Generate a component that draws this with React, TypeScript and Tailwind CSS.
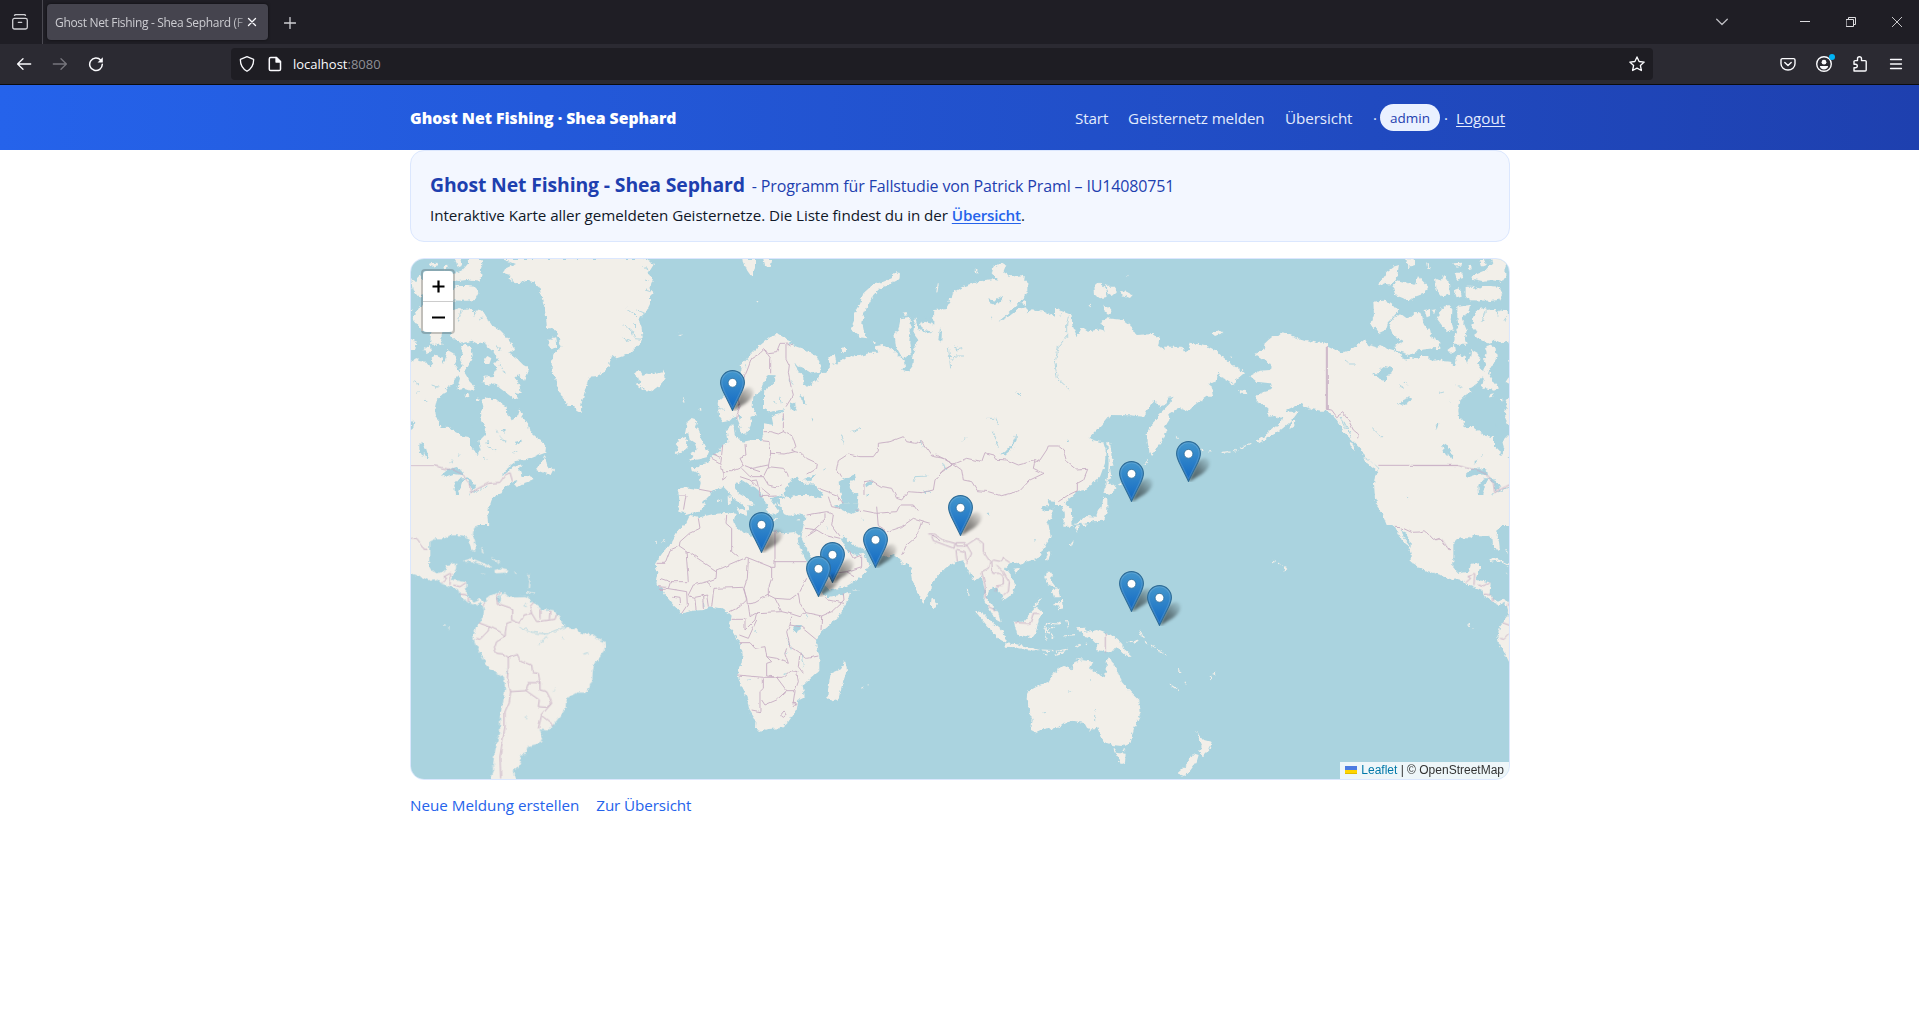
import type { ReactNode } from "react";

const WATER = "#aad3df";
const LAND = "#f2efe9";
const BORDER = "#c6adc3";

/* Map sheets: three units per pixel, placed at (x, y) of the map canvas. */
type Sheet = { x: number; y: number; land: string; water?: string; rivers?: string; islands?: string; borders?: string };

const americas: Sheet[] = [
  {
    x: 400,
    y: 250,
    land:
      "M-40 322L5 330 40 332 80 335 92 350 98 335 95 320 110 315 125 322 130 345 138 320 142 300 160 310 168 320 162 342 178 365 188 345 180 330 188 310 182 290 200 284 215 295 218 320 205 345 192 365 198 375 210 395 225 415 210 422 187 415 172 418 180 385 175 376 160 400 138 415 142 425 125 435 110 450 103 480 105 500 118 515 122 532 145 530 165 545 185 557 210 562 210 590 222 600 232 615 242 600 235 575 255 555 258 535 245 510 243 485 250 470 245 450 258 441 275 450 285 445 305 462 320 470 322 495 338 510 350 500 358 475 368 500 385 525 388 545 410 565 425 572 438 590 436 608 410 618 380 630 350 632 320 655 305 680 340 652 365 643 358 660 365 678 385 678 400 685 395 692 370 700 350 712 345 705 352 690 335 695 325 705 310 715 305 730 290 735 275 750 265 780 262 800 265 825 -40 825Z" +
      "M435 612L425 640 408 660 430 668 455 675 462 660 445 655 440 640Z" +
      "M178 200L190 180 215 177 222 190 230 178 248 182 262 205 275 225 300 240 320 260 335 280 342 300 328 308 350 325 370 345 388 355 380 375 372 392 355 375 345 385 358 402 362 430 345 425 358 446 340 445 320 430 300 415 285 400 262 405 245 395 255 380 278 378 292 352 275 340 298 335 280 305 262 290 255 275 230 280 215 272 190 280 160 265 150 255 170 240Z" +
      "M145 230L148 200 160 180 180 174 188 180 178 200 175 225 185 250 165 255Z" +
      "M163 118L175 108 200 108 225 110 235 130 225 150 200 152 140 151 125 140 125 110 145 110Z" +
      "M140 80L165 70 188 60 205 40 200 27 245 27 247 45 240 62 248 75 235 95 200 90 175 93 150 88Z" +
      "M165 27L180 27 185 45 172 50Z M88 40L112 38 116 46 95 50Z M130 46L142 44 143 55 133 58Z M92 68L115 68 118 84 98 90Z" +
      "M100 170L138 165 133 190 113 205 128 240 123 270 128 284 90 284 93 250 103 230 100 200Z" +
      "M38 205L53 175 73 165 85 178 83 215 88 238 70 245 53 225Z" +
      "M33 85L48 95 58 75 75 100 78 133 55 140 38 120Z M93 120L108 115 113 140 98 145Z" +
      "M252 330L262 318 274 325 268 342 256 342Z M195 435L206 430 208 440 198 442Z M228 446L236 446 234 454 228 452Z M70 300L90 285 93 305 80 312Z" +
      "M30 265L50 275 45 300 33 300Z M24 180L35 178 30 190Z",
    water:
      "M125 675L145 657 165 652 190 665 192 676 160 672 135 680Z M165 735L163 705 180 685 202 684 185 700 175 735Z M195 680L215 690 228 712 217 722 210 705Z" +
      "M54 585L66 578 78 595 86 622 82 628 72 608 70 622 60 605Z M324 478L330 474 332 482 326 484Z M152 632L158 632 158 640 152 640Z M215 525L220 520 222 530Z" +
      "M305 540L318 538 314 548Z M330 500L338 498 336 512Z M345 575L366 572 360 582 348 584Z M310 570L320 572 314 582Z M255 575L268 574 262 582Z M35 525L44 518 38 540Z",
    rivers: "M205 735L217 727 235 722 262 708 M262 590L290 600 M300 560L315 575 M95 405L115 412 M45 430L60 426 M75 450L84 458 M250 620L262 628 M285 540L295 548 M340 610L352 604 M175 620L180 610 M220 185L222 200 M248 200L240 212 M300 300L290 285 M300 345L310 365 320 372 M183 180L175 215",
    borders: "M-30 646L102 646 130 655 160 660 185 672 208 700 212 728 235 715 265 700 300 697 315 675 330 668 338 695",
  },
  {
    x: 400,
    y: 510,
    land:
      "M-40 -20L265 -20 265 15 245 35 222 55 218 75 225 95 228 120 218 122 207 100 205 85 190 76 150 76 135 85 110 85 90 95 80 105 78 150 90 175 105 190 135 185 140 165 168 160 168 175 158 198 155 210 175 212 200 218 197 250 210 268 222 275 240 266 252 280 252 292 240 278 225 285 205 275 180 258 175 240 150 230 125 220 105 208 85 210 60 198 33 190 0 180 -40 155Z" +
      "M248 285L258 268 275 255 300 243 305 250 292 262 292 275 300 280 303 268 300 255 315 250 325 260 380 258 395 275 410 285 425 298 460 300 478 320 487 340 500 353 530 358 545 370 575 373 595 388 613 395 614 415 605 435 583 460 578 485 577 510 560 548 530 548 505 562 498 575 497 595 480 620 455 650 445 662 415 658 428 680 420 700 385 708 380 730 358 735 365 748 356 770 338 785 350 815 268 815 282 780 282 740 290 700 300 670 300 620 310 570 315 540 313 505 290 490 262 470 245 435 225 400 220 380 228 350 250 320 252 300Z" +
      "M192 152L215 145 240 155 278 172 260 172 238 160 215 153 198 156Z M283 180L300 176 325 182 322 188 285 190Z M245 188L258 190 250 193Z M340 188L351 188 351 191 340 191Z",
    rivers: "M358 350L400 368 440 372 470 360 500 350 M415 405L440 378 M320 480L322 490 M374 622L382 622 M376 282L376 290 M550 432L564 428 M460 545L468 536 M488 380L492 388",
    islands: "M385 195L390 215 388 235 M245 115L250 130 M275 145L300 158 M380 245L405 250 M278 770L285 740 M130 345L138 346 M145 354L149 354",
    borders:
      "M33 85L50 85 65 105 72 118 82 118 M125 218L140 205 132 200 150 190 M152 190L150 225 M160 225L180 230 198 218 M180 252L200 255 M205 262L205 275 M250 280L250 288 M302 248L290 258 292 280 335 295 335 330 360 340 372 315 395 310 390 290 400 278 M335 335L320 340 316 365 316 380 290 395 283 415 290 430 310 432 325 442 325 480 322 505 332 545 M235 338L268 350 265 362 240 388 228 385 M268 350L300 365 315 382 M325 442L352 433 360 450 395 465 398 488 415 490 420 518 385 518 378 542 332 545 M378 542L418 570 415 590 440 592 455 580 M420 518L420 540 440 545 450 565 455 580 425 615 415 655 M425 617L460 645 M332 545L328 575 315 605 315 650 308 690 300 740 302 805 M395 310L410 335 435 332 465 328 470 312 M420 298L420 325 M450 302L448 328",
  },
  {
    x: 1220,
    y: 250,
    land:
      "M670 325L640 335 620 318 600 318 590 325 565 330 545 325 540 310 520 300 500 295 480 285 470 292 445 285 435 268 420 280 405 290 390 300 365 308 350 300 325 288 310 278 290 278 260 270 245 268 225 262 210 255 188 247 175 258 160 258 145 270 135 280 130 300 106 312 125 325 145 335 155 350 150 360 120 362 90 378 110 395 150 400 155 420 125 428 110 437 110 455 130 465 145 475 145 500 165 498 175 505 190 500 200 480 220 470 245 462 260 472 275 478 300 482 318 482 335 492 350 510 365 530 375 550 395 570 410 585 425 600 435 625 460 640 475 655 465 680 462 700 465 745 480 775 500 825 670 825Z" +
      "M195 485L185 515 160 535 130 560 105 575 120 577 150 558 185 538 215 512 235 485Z M208 538L215 515 226 512 222 528Z" +
      "M388 575L398 580 405 603 395 595Z M430 622L448 630 478 655 470 662 435 635Z M57 420L80 424 82 430 62 428Z" +
      "M508 225L520 205 540 190 560 205 575 200 590 185 605 190 612 225 630 240 635 265 660 285 640 295 600 300 570 315 540 305 520 290 550 275 530 265 515 245Z M614 180L630 178 630 198 620 202Z" +
      "M460 155L490 152 515 160 535 182 520 200 505 215 497 240 475 250 465 235 452 225 462 195Z" +
      "M520 112L530 90 550 95 585 105 595 75 605 90 625 110 615 130 585 140 565 155 550 145 525 135Z" +
      "M476 100L500 65 520 50 537 45 532 80 510 110 498 98 480 106Z M558 28L585 28 585 45 565 52Z M618 35L632 58 622 56Z",
    water:
      "M456 370L475 370 480 360 495 348 520 355 515 370 500 378 498 392 478 385Z M528 460L545 460 550 450 575 440 590 432 594 440 570 455 545 468Z M570 505L600 492 630 496 592 500Z M645 515L655 510 652 535 645 540Z M625 400L640 402 630 408Z M560 738L568 744 566 748Z",
    rivers: "M375 330L390 342 408 342 M535 405L552 415 M600 385L608 392 M456 535L475 555 M550 395L565 405 M655 395L670 405 M660 430L670 425 M360 500L380 540 M372 515L395 560 M480 560L490 560",
    islands: "M98 578L60 595 M50 598L40 602 M32 606L25 607 M15 609L5 610 M355 500L372 545 M30 318L36 322",
    borders: "M322 288L322 478 M319 288L319 478 335 480 350 500 368 488 385 510 400 540 415 552 413 565 M475 646L714 646",
  },
  {
    x: 1220,
    y: 510,
    land: "M465 -20L480 0 500 35 525 50 540 80 550 95 562 105 572 128 588 146 588 138 575 120 565 100 552 85 545 62 556 68 575 100 595 120 610 135 627 160 627 175 665 195 700 210 700 -20Z",
    borders: "M525 52L545 53 575 67 600 66 612 62 628 75 640 88 658 82 672 100 682 115 694 118",
  },
];

const oldWorld: Sheet[] = [
  {
    x: 400,
    y: 250,
    land:
      "M305 27L320 32 345 42 318 55 308 68 330 75 325 85 345 100 365 98 380 90 400 97 418 113 424 140 432 165 438 200 441 235 458 235 472 250 478 270 484 290 462 310 455 335 455 365 466 385 470 405 480 430 495 455 505 468 520 468 530 480 542 486 545 460 550 440 558 410 567 380 590 378 610 368 625 350 637 315 650 325 670 318 690 310 722 278 728 262 725 235 718 215 722 200 740 185 750 165 750 140 764 130 748 115 758 90 745 70 762 42 750 35 730 27Z" +
      "M446 268L465 262 470 290 455 298 444 285Z" +
      "M705 365L720 363 728 378 735 370 750 372 768 368 790 362 797 385 780 405 755 424 735 420 720 410 706 402 727 394 708 380Z M834 255L845 250 842 258Z",
    rivers: "M728 268L705 266 695 240 670 225 M715 205L700 190 680 175 M700 220L720 240 M712 180L735 190 M730 50L745 60 M735 90L750 95 M735 120L752 125 M442 245L460 270 M340 95L335 85 M665 265L690 275",
    islands: "M851 442L855 458",
  },
  {
    x: 660,
    y: 250,
    land:
      "M173 455L195 435 220 400 245 360 242 345 270 315 295 290 330 262 355 252 375 265 395 272 385 280 410 290 440 300 470 320 484 345 480 365 455 370 430 355 405 345 420 368 430 375 430 400 440 410 455 405 460 390 472 395 480 370 495 365 510 355 505 320 525 316 528 330 518 345 540 335 560 320 600 318 630 308 655 308 648 288 670 285 700 300 720 320 735 335 738 350 722 358 745 365 760 345 762 325 775 305 795 305 795 325 780 338 770 325 755 330 762 300 775 270 760 250 765 200 775 235 800 250 820 245 790 240 780 222 795 215 825 225 845 250 835 270 845 290 850 260 840 210 820 205 820 182 875 178 865 150 880 135 910 120 910 830 430 830 437 797 410 792 390 797 370 788 365 765 356 745 375 742 365 735 345 742 330 745 345 765 358 782 350 795 335 788 320 762 308 745 300 725 285 712 265 703 245 690 240 700 225 697 222 710 235 730 260 745 285 765 275 768 265 765 268 778 260 788 248 765 225 750 205 725 190 710 170 718 155 722 150 735 130 755 125 780 100 790 80 795 70 785 55 782 58 745 53 718 75 712 118 718 122 700 118 670 95 662 93 653 115 655 120 645 145 638 155 620 180 600 188 585 205 575 200 540 220 522 224 555 240 570 250 575 275 570 305 570 312 545 312 520 340 525 335 500 365 490 375 478 350 482 325 487 312 470 312 430 325 410 345 392 347 376 325 375 315 392 300 425 280 440 278 470 290 495 275 500 272 530 260 550 245 552 240 525 228 498 218 500 205 514 190 517 178 500Z" +
      "M708 290L703 250 715 240 722 205 752 200 752 240 748 275 752 315 728 325Z M728 188L740 186 742 196 730 197Z" +
      "M95 507L112 512 105 530 118 540 120 560 135 590 147 605 140 622 115 628 88 632 100 620 90 612 110 600 105 580 90 570 85 550 75 550 80 520Z M65 560L82 570 80 595 65 608 44 612 55 592 47 582Z" +
      "M232 785L265 777 260 798Z M203 738L213 735 212 765 204 767Z M208 710L214 712 212 730Z M338 803L360 806 345 808Z" +
      "M250 27L288 27 288 50 275 80 262 62 252 40Z M310 27L337 27 332 52 315 48Z" +
      "M705 67L720 70 718 88 690 102 660 115 640 135 625 165 612 190 607 220 612 245 622 265 600 262 590 248 572 238 582 215 582 190 600 160 610 130 640 103 670 95 695 85Z" +
      "M545 295L558 292 558 305 547 310Z M635 272L645 278 640 284Z M-5 365L10 372 14 388 -5 405Z",
    water:
      "M370 735L375 715 385 705 395 685 410 680 415 690 435 702 460 700 475 715 490 735 480 744 445 735 415 735 390 744Z M430 688L445 682 468 672 455 690 440 697Z" +
      "M536 695L560 682 582 674 586 690 568 700 570 715 580 732 595 735 592 785 575 792 553 783 552 760 545 740 538 715Z M575 728L592 730 588 742 578 740Z" +
      "M390 462L400 455 411 465 405 482 392 480Z M420 432L430 438 440 465 428 462Z M235 498L244 498 240 512Z M615 700L640 690 632 702 618 712Z M620 730L625 732 620 742Z M455 500L464 508 458 516Z",
    rivers: "M760 692L765 680 805 678 M790 725L812 724 M545 555L552 570 548 585 M575 545L600 535 M780 570L790 590 M840 655L852 665 M490 660L500 655 M360 440L365 465 M340 455L350 460 M405 340L410 350 M865 270L868 355 M875 320L895 318 M368 500L368 515 M385 390L400 400 M245 325L265 330 M175 475L195 478 M255 355L262 345 M795 200L810 205 M865 140L885 150",
    islands: "M835 100L830 130 M55 253L65 255 M290 155L296 155 M70 445L76 455 M120 475L123 482 M350 760L365 770 M360 745L372 760 M170 755L185 750 M255 690L275 710",
    borders:
      "M230 510L232 490 240 470 235 450 245 400 262 360 275 325 300 310 312 298 332 325 332 370 M312 298L325 308 350 305 360 280 378 280 385 290 398 285 M378 285L378 325 388 345 385 370 392 405 400 435 378 470 M370 490L370 545 355 552 330 545 314 545 M370 545L398 560 408 590 395 600 405 605 425 610 440 625 472 640 470 655 440 672 M305 572L330 575 332 610 325 650 M330 610L375 612 405 605 M255 582L258 618 240 625 250 645 275 655 325 645 M188 588L182 640 190 665 215 665 240 655 250 645 M155 625L182 640 M160 612L180 622 M118 718L155 725 M190 665L188 690 200 680 M325 650L310 680 325 705 345 710 365 705 M325 650L370 655 382 670 385 680 M245 655L270 680 310 680 M240 680L270 690 298 715 300 740 350 738 M270 655L300 665 M305 715L330 735 M60 735L78 735 70 782 M275 692L290 690 295 710",
  },
  {
    x: 940,
    y: 250,
    land:
      "M-20 180L20 178 30 160 35 130 65 112 100 100 120 95 135 90 155 88 175 92 155 70 160 50 182 38 197 48 190 65 200 72 215 80 245 76 262 95 262 120 250 145 225 170 200 195 170 218 205 200 235 178 258 172 262 190 275 178 300 182 330 192 345 200 345 176 370 185 395 195 397 225 412 262 425 232 445 245 480 238 497 242 482 215 500 205 550 210 570 225 590 255 640 252 658 265 655 285 675 300 672 290 710 290 725 290 735 307 750 300 748 278 795 285 825 300 850 322 870 340 890 352 912 370 890 388 885 405 862 390 840 380 835 365 830 395 803 402 818 415 822 440 800 440 770 460 745 484 725 475 705 480 685 492 688 510 675 530 680 545 665 575 645 600 632 620 625 590 620 550 630 530 650 510 660 490 680 470 690 460 700 438 685 440 678 465 662 472 640 452 625 475 610 500 570 496 510 495 490 520 448 565 458 570 490 578 497 600 495 640 480 680 460 700 435 720 415 722 395 740 372 758 395 780 398 830 370 830 372 785 365 765 345 765 345 752 320 750 330 768 296 770 315 784 340 775 332 800 310 830 -20 830Z" +
      "M425 808L440 798 470 800 485 770 490 740 502 745 502 780 492 812 420 815Z M490 728L500 705 498 685 515 706 533 714 515 732Z M502 575L511 580 515 620 523 645 510 650 514 685 503 690 506 640Z" +
      "M463 105L478 98 495 115 500 140 480 145 465 135Z M495 100L505 110 525 110 530 125 515 138 502 130Z M540 122L560 125 578 135 570 144 548 136Z M490 162L496 168 515 180 512 192 495 188Z M815 250L835 240 850 248 825 258Z M244 158L258 152 258 165Z",
    water: "M178 612L195 606 215 585 230 552 230 570 215 598 195 614Z M145 148L165 152 190 138 185 150 165 165 150 160Z M380 570L390 568 388 576Z M0 235L6 245 4 275 -5 270Z",
    rivers: "M380 225L380 260 355 290 345 340 352 385 390 420 M385 200L380 225 M140 505L168 505 175 525 M160 545L175 590 M35 330L45 318 75 318 M45 285L50 300 70 295 M65 575L78 562 M230 425L245 440 M25 290L32 355 M205 150L210 160 M155 200L155 210 M360 200L365 190 M10 640L18 660 M145 785L150 790",
    islands: "M625 630L612 645 M708 560L716 566 M780 598L790 602 M805 605L815 606 M845 608L865 605 M885 603L892 602 M450 162L455 168 M535 705L545 700 M105 60L115 70 M560 80L568 76 M30 150L45 130",
    borders: "M-10 615L40 642 80 625 125 635 135 608 162 615 170 628 200 630 235 645 285 632 280 655 312 670 270 690 240 722 185 737 145 725 112 722 95 695 70 690 65 660 40 642 0 670 M285 640L300 630 320 600 325 588 355 588 370 600 380 635 410 660 443 658 430 690 412 700 412 722 385 735 355 755",
  },
  {
    x: 660,
    y: 250,
    land: "",
    borders:
      "M530 655L535 632 565 612 600 620 640 620 655 600 655 580 690 575 730 560 740 575 765 580 785 572 815 618 850 625 880 643 M530 655L545 680 M612 735L612 695 635 692 665 710 695 715 710 745 725 750 M725 750L745 725 785 728 820 720 825 690 850 660 880 643 M590 780L610 782 650 790 710 785 720 765 760 765 775 785 M475 715L530 735 550 760 M505 740L515 770 540 775",
  },
  {
    x: 640,
    y: 510,
    land:
      "M150 15L180 22 220 12 265 8 287 12 280 35 290 55 320 70 345 87 350 65 370 55 400 65 430 70 465 66 482 80 470 85 485 125 500 155 510 190 530 230 548 250 560 262 600 255 630 245 625 270 600 315 570 345 545 365 528 388 530 410 538 440 538 480 510 505 488 525 494 560 475 570 470 600 445 635 420 655 385 657 360 666 345 650 347 630 328 600 320 560 300 520 292 495 305 460 308 430 298 400 290 380 268 350 275 320 265 310 240 295 215 290 190 300 160 302 125 310 100 285 80 260 65 235 46 220 52 190 46 160 70 125 95 95 115 60 138 40Z" +
      "M615 450L621 480 605 530 595 568 578 574 562 560 565 535 572 490 600 478Z M875 262L890 280 885 297 873 292Z" +
      "M500 -20L495 30 487 65 482 75 488 92 505 125 525 160 535 190 560 235 575 240 620 228 660 205 690 165 680 150 672 125 655 135 635 132 618 118 603 88 610 78 625 92 645 107 672 118 690 122 740 140 765 135 780 150 795 165 810 163 815 205 835 255 850 278 862 260 872 240 877 215 910 180 910 -20Z" +
      "M120 -20L200 -20 160 5 120 2Z M290 -10L300 -5 320 5 318 12 295 0Z M380 -5L400 -10 405 0 395 15 380 5Z M385 28L410 30 400 34Z M468 30L480 26 478 32Z M422 -5L430 8 460 10 500 12 500 -20 420 -20Z",
    water: "M460 350L482 345 482 358 462 368Z M582 -12L610 -20 655 -20 652 5 635 12 612 3Z",
    rivers: "M443 385L450 410 455 418 M440 425L438 435 M483 430L490 470 M500 310L500 325 M485 80L475 85 M345 360L350 368 M325 510L335 511 M430 495L440 490 M560 50L562 60 M665 25L672 28 M190 275L193 290",
    islands: "M45 95L50 98 M65 98L75 92 M638 240L655 240 M665 532L670 535 M683 524L686 525",
    borders:
      "M175 25L180 55 148 70 120 95 118 108 228 182 320 142 395 172 M118 108L90 120 75 160 50 160 M138 122L145 215 92 215 85 235 M260 15L258 40 275 55 275 125 295 142 M405 60L405 155 500 155 M405 155L405 172 395 172 395 205 385 235 385 260 M325 145L322 205 312 235 320 270 M230 182L228 205 200 215 160 225 145 255 M222 235L310 232 M222 235L215 290 M200 215L218 230 M320 270L300 290 270 305 M310 235L320 265 322 282 345 278 385 255 405 265 450 268 475 250 480 280 498 308 M405 265L425 305 455 312 480 320 498 308 545 318 575 305 612 270 610 250 M500 205L480 245 M555 260L565 270 612 280 M545 318L543 360 M325 285L330 320 350 308 425 305 M275 328L315 328 315 360 345 330 350 308 M298 375L325 385 350 330 M300 398L330 398 345 415 375 410 380 440 395 455 380 460 380 498 415 502 M292 495L370 502 430 502 450 482 475 485 M370 505L370 535 360 545 360 605 335 600 M365 570L375 585 410 570 440 542 410 502 M440 542L465 542 475 515 470 485 M465 542L460 575 465 590 M380 440L410 445 445 460 435 430 440 415 M455 320L450 345 440 365 450 410 480 430 500 445 535 438 M482 350L528 388 M480 430L475 470 490 490 M450 345L480 350 M422 615L432 603 442 612 430 622Z M455 580L462 575 468 585 460 590Z M80 235L110 240 140 245 142 285 125 310 M100 262L120 265 122 285 M145 260L165 265 168 300 M165 262L200 255 205 290 M188 255L190 295 M60 205L90 215 M55 230L80 232 M60 238L80 238 M500 15L560 5 580 15 575 45 600 78 M495 55L530 60 560 78 600 88 M530 60L500 80 M555 10L555 30 510 70 M580 190L620 185 665 170 665 140 M620 185L645 200 M625 120L640 145 665 135 M710 -10L715 50 740 65 735 85 M740 65L785 50 820 25 870 40 M785 135L800 105 830 80 845 35 M875 75L900 92",
  },
  {
    x: 930,
    y: 510,
    land:
      "M-20 -20L340 -20 335 0 365 5 338 20 355 40 362 80 350 100 325 145 290 155 265 163 245 158 225 175 240 195 255 225 250 250 220 272 215 255 200 235 190 230 178 240 170 262 185 285 205 310 212 337 195 328 180 300 163 275 165 245 155 200 150 205 130 210 120 185 105 170 103 150 80 155 60 165 40 180 5 215 5 240 -20 250Z" +
      "M5 262L20 280 16 297 3 292Z M400 -5L425 -5 427 30 405 38Z M430 45L460 28 498 25 505 -5 525 -5 525 20 500 30 475 38 450 42Z M434 48L447 45 440 68Z M452 42L470 40 468 48Z" +
      "M354 126L361 128 355 152 348 146Z M250 176L265 174 268 180 258 190Z M133 300L160 310 185 335 215 360 228 380 225 398 205 387 180 357 155 328Z M225 400L260 403 300 412 330 420 300 422 255 412 228 410Z" +
      "M252 335L280 335 300 310 320 290 338 305 326 330 318 365 305 382 262 374 255 350Z M350 188L366 188 363 212 380 235 352 222 346 205Z M368 285L398 268 402 295 388 298 382 288Z M365 240L385 238 390 262 372 262Z" +
      "M438 355L465 353 467 368 500 360 550 378 575 400 580 415 605 437 590 438 560 410 545 428 500 420 505 405 490 390 465 380 455 366Z M590 396L615 393 628 382 622 395 600 400Z M372 435L405 422 395 432 378 438Z" +
      "M292 545L320 530 355 515 370 490 400 468 425 478 430 458 455 450 490 455 480 475 500 490 524 502 530 480 530 455 538 438 550 465 568 490 575 515 600 545 628 572 632 610 612 655 602 695 575 708 548 705 520 695 505 655 490 655 480 667 465 640 430 632 400 640 380 655 350 655 320 668 303 660 308 630 298 600 290 570Z" +
      "M557 728L587 731 585 758 572 762Z M798 662L822 690 845 696 838 718 820 738 808 725 816 705 806 682Z M790 730L806 735 800 755 778 785 762 798 742 790 770 765Z M835 502L845 500 842 508Z",
    water: "M498 650L504 655 500 672Z M492 598L498 598 496 605Z M172 8L180 8 178 14Z M312 88L318 88 315 94Z M416 545L424 544 420 548Z",
    rivers: "M494 612L494 635 M338 608L345 608 M478 508L482 512",
    islands: "M342 348L360 340 385 342 388 335 M345 345L348 390 M352 360L372 385 M355 355L375 350 M410 330L415 355 M400 378L435 374 M335 420L370 422 M380 424L410 418 M340 432L352 435 M435 415L455 402 M468 398L472 405 M335 262L312 290 M645 392L655 402 M665 405L675 412 M680 418L700 430 M702 435L708 438 M745 478L750 488 M722 525L748 542 M765 515L767 520 M848 492L858 490 M430 95L420 108 M112 235L114 255 M440 446L460 448 M630 360L640 385 M552 715L556 725 M582 718L585 725",
    borders:
      "M-5 72L10 72 45 92 75 100 72 115 45 105 10 92 5 78 M78 98L105 98 108 108 80 108Z M78 120L82 155 M80 118L105 125 108 150 M110 162L125 130 110 105 140 85 160 100 160 125 180 155 175 175 155 185 165 225 165 265 M180 160L190 150 215 155 220 145 240 158 M185 155L188 190 210 190 220 200 220 225 198 228 195 245 M200 165L220 185 238 215 235 245 220 258 M175 290L195 300 M255 338L300 340 310 310 328 310 M526 370L526 428",
  },
  {
    x: 1220,
    y: 510,
    land: "M192 174L198 172 202 178 194 182Z",
    islands: "M158 154L164 156 M174 160L178 161 M184 164L190 167",
  },
];

function Sheets({ sheets }: { sheets: Sheet[] }) {
  return (
    <>
      {sheets.map((s, i) => (
        <g key={i} transform={`translate(${s.x} ${s.y}) scale(0.33333)`} fill="none" strokeLinejoin="round">
          {s.land && <path d={s.land} fill={LAND} />}
          {s.islands && <path d={s.islands} stroke={LAND} strokeWidth="3.4" />}
          {s.water && <path d={s.water} fill={WATER} />}
          {s.rivers && <path d={s.rivers} stroke={WATER} strokeWidth="2.6" />}
        </g>
      ))}
    </>
  );
}

function Borders({ sheets }: { sheets: Sheet[] }) {
  return (
    <>
      {sheets.map((s, i) =>
        s.borders ? (
          <path key={i} transform={`translate(${s.x} ${s.y}) scale(0.33333)`} d={s.borders} fill="none" stroke={BORDER} strokeWidth="2.7" strokeLinejoin="round" />
        ) : null,
      )}
    </>
  );
}

function WorldMap() {
  return (
    <svg className="block h-[520px] w-[1098px]" viewBox="411 259 1098 520">
      <defs>
        <filter id="coast" filterUnits="userSpaceOnUse" x="400" y="250" width="1120" height="540" colorInterpolationFilters="sRGB">
          <feTurbulence type="fractalNoise" baseFrequency="0.24" numOctaves="3" seed="4" />
          <feDisplacementMap in="SourceGraphic" scale="4.5" xChannelSelector="R" yChannelSelector="G" />
        </filter>
        <filter id="frontier" filterUnits="userSpaceOnUse" x="400" y="250" width="1120" height="540" colorInterpolationFilters="sRGB">
          <feTurbulence type="fractalNoise" baseFrequency="0.12" numOctaves="2" seed="9" />
          <feDisplacementMap in="SourceGraphic" scale="3" xChannelSelector="R" yChannelSelector="G" />
        </filter>
      </defs>
      <rect x="411" y="259" width="1098" height="520" fill={WATER} />
      <g filter="url(#coast)">
        <Sheets sheets={oldWorld} />
        <Sheets sheets={americas} />
        <g transform="translate(-1024 0)">
          <Sheets sheets={americas.slice(2)} />
        </g>
        <g transform="translate(1024 0)">
          <Sheets sheets={americas.slice(0, 2)} />
        </g>
      </g>
      <g filter="url(#frontier)">
        <Borders sheets={oldWorld} />
        <Borders sheets={americas} />
        <g transform="translate(1024 0)">
          <Borders sheets={americas.slice(0, 2)} />
        </g>
      </g>
    </svg>
  );
}

/* Marker tips, relative to the map canvas. */
const pins = [
  [321.5, 152], [777.5, 223], [720.5, 243], [549.5, 277], [350.5, 294],
  [464.5, 309], [421.5, 324], [407.5, 338], [720.5, 353], [748.5, 367],
];

function Pin({ x, y }: { x: number; y: number }) {
  return (
    <svg className="absolute h-[41px] w-[41px]" style={{ left: x - 12.5, top: y - 41 }} viewBox="0 0 41 41">
      <path d="M12.5 41L19 26C22 19 28 15 32 18C36 22 32 29 26 33Z" fill="url(#pinShadow)" filter="url(#pinBlur)" />
      <path d="M12.5 .6C5.9 .6 .6 6 .6 12.6C.6 15.6 1.8 18.6 3.3 21.8L12.5 40.3L21.7 21.8C23.2 18.6 24.4 15.6 24.4 12.6C24.4 6 19.1 .6 12.5 .6Z" fill="url(#pinFill)" stroke="#2e6c97" strokeWidth="1.1" />
      <path d="M12.5 1.8C6.6 1.8 1.8 6.6 1.8 12.6C1.8 15.4 2.9 18.2 4.3 21.2L12.5 37.8L20.7 21.2C22.1 18.2 23.2 15.4 23.2 12.6C23.2 6.6 18.4 1.8 12.5 1.8Z" fill="none" stroke="#fff" strokeOpacity=".13" strokeWidth="1.1" />
      <circle cx="12.5" cy="12.8" r="4.4" fill="#fff" stroke="#2e6c97" strokeWidth=".8" />
    </svg>
  );
}

/* Stroked icon frame shared by the browser chrome. */
function Icon({ children, className = "", size = 16 }: { children: ReactNode; className?: string; size?: number }) {
  return (
    <svg width={size} height={size} viewBox={`0 0 ${size} ${size}`} fill="none" stroke="currentColor" strokeWidth="1.3" strokeLinecap="round" strokeLinejoin="round" className={`shrink-0 ${className}`}>
      {children}
    </svg>
  );
}

function Chrome() {
  return (
    <div className="font-['Open_Sans',sans-serif] text-[#fbfbfe]">
      <div className="flex h-11 items-center bg-[#1f1e25]">
        <Icon className="ml-3 text-[#d0d0d4]">
          <path d="M2.5 1.2C3 .7 3.5 .6 4 .6h8c.5 0 1 .1 1.5 .6" />
          <rect x=".7" y="4.4" width="14.6" height="10.6" rx="1.8" />
          <path d="M6.3 8.3h3.4" />
        </Icon>
        <div className="ml-[14px] h-11 w-px bg-[#4a4951]" />
        <div className="ml-1 flex h-9 w-[221px] items-center rounded bg-[#45444e] pl-2 shadow-[0_0_3px_rgba(0,0,0,0.6)]">
          <div className="w-[192px] whitespace-nowrap pt-[2px] text-[12px] tracking-[-0.33px] text-[#cdcdd2] [mask-image:linear-gradient(to_right,#000_178px,transparent_195px)]">
            Ghost Net Fishing - Shea Sephard (F
          </div>
          <Icon size={10} className="-mt-px"><path d="M1.5 1.5l7 7M8.5 1.5l-7 7" /></Icon>
        </div>
        <Icon size={12} className="ml-4 mt-px text-[#cfcfd4]"><path d="M6 .5v11M.5 6h11" /></Icon>
        <div className="grow" />
        <Icon size={12} className="mr-[72px] text-[#bcbcc1]"><path d="M.7 3.3L6 8.5l5.3-5.2" /></Icon>
        <Icon size={10} className="mr-9 text-[#dcdcdf]"><path d="M0 4.5h10" strokeWidth="1" /></Icon>
        <Icon size={10} className="mr-9 text-[#dcdcdf]"><path d="M.5 2.5h7v7h-7zM2.5 2.5v-2h7v7h-2" strokeWidth="1" strokeLinejoin="miter" /></Icon>
        <Icon size={10} className="mr-[17px] text-[#dcdcdf]"><path d="M.3 .3l9.4 9.4M9.7 .3L.3 9.7" strokeWidth=".9" /></Icon>
      </div>
      <div className="flex h-[41px] items-center border-b border-[#0c0c0d] bg-[#2b2a32]">
        <Icon className="ml-4"><path d="M14.7 8H1.8M7 2.8L1.6 8L7 13.2" /></Icon>
        <Icon className="ml-5 text-[#77767d]"><path d="M1.3 8h12.9M9 2.8L14.4 8L9 13.2" /></Icon>
        <Icon className="ml-5">
          <path d="M12.8 4.2A6.3 6.3 0 1 0 14.3 8.3" strokeWidth="1.5" />
          <path d="M14.8 1.2v5.2H9.6z" fill="currentColor" stroke="none" />
        </Icon>
        <div className="ml-[127px] flex h-8 w-[1422px] items-center rounded bg-[#1e1d23]">
          <Icon className="ml-2"><path d="M8 .7l6.6 2.6c.2 5-1.2 8.8-6.6 12C2.6 12.1 1.2 8.3 1.4 3.3z" /></Icon>
          <Icon className="ml-3"><path d="M3.7 1.5h5.800l4 4v7.700c0 .8-.6 1.400-1.400 1.400H3.700c-.8 0-1.400-.6-1.400-1.400V2.900c0-.8.6-1.400 1.400-1.400z" strokeWidth="1.500" /><path d="M9 1.500v4.500h4.500z" fill="currentColor" /></Icon>
          <div className="ml-[10px] pt-[2px] text-[13px]">
            localhost<span className="text-[#8f8f96]">:8080</span>
          </div>
          <Icon className="ml-auto mr-2"><path d="M8 .9l2.100 4.600 5.100.6-3.800 3.400 1 5L8 12.100l-4.400 2.400 1-5L.8 6.100l5.100-.6z" /></Icon>
        </div>
        <div className="ml-auto mr-[15px] flex items-center gap-5">
          <Icon><path d="M2.400 2.600h11.200c.8 0 1.400.5 1.400 1.300v3.800a7 6.300 0 0 1-14 0V3.900c0-.8.6-1.300 1.400-1.300zM4.800 6.400L8 9.400l3.200-3" strokeWidth="1.400" /></Icon>
          <div className="relative h-4 w-4">
            <svg width="16" height="16" viewBox="0 0 16 16" fill="none">
              <circle cx="8" cy="8" r="7.300" stroke="currentColor" strokeWidth="1.400" />
              <circle cx="8" cy="6.200" r="2.400" fill="currentColor" />
              <path d="M3.900 10h8.200c0 2.200-2 3.400-4.100 3.400S3.900 12.200 3.900 10z" fill="currentColor" />
            </svg>
            <span className="absolute -top-[2px] left-[13px] h-[6px] w-[6px] rounded-full bg-[#00b3f4]" />
          </div>
          <Icon><path d="M2 15h11.200c.6 0 1-.4 1-1V5.600c0-.6-.4-1-1-1H9.500V2.700a2 2 0 0 0-4 0v1.900H3c-.6 0-1 .4-1 1v2.600h1.500a1.800 1.800 0 0 1 0 3.600H2z" strokeWidth="1.400" /></Icon>
          <Icon><path d="M2.500 3.500h11M2.500 8h11M2.500 12.500h11" /></Icon>
        </div>
      </div>
    </div>
  );
}

export default function App() {
  return (
    <div className="h-[1026px] overflow-hidden bg-white font-['Open_Sans',sans-serif] text-[15.2px] text-gray-900">
      <Chrome />
      <header className="h-[65px] bg-[linear-gradient(90deg,#2563eb,#1e40af)] pl-px">
        <div className="mx-auto flex h-full w-[1100px] items-center justify-between pt-px leading-6 text-[#e4ecfd]">
          <span className="text-[15.8px] font-extrabold tracking-[-0.02px] text-white">Ghost Net Fishing · Shea Sephard</span>
          <nav className="flex items-center">
            <a className="w-[53px] tracking-[-0.12px]">Start</a>
            <a className="w-[157px] tracking-[-0.12px]">Geisternetz melden</a>
            <a className="w-[88px] tracking-[-0.08px]">Übersicht</a>
            <span className="w-[7px]">·</span>
            <span className="-mt-px flex h-[27px] w-[60px] items-center justify-center rounded-full bg-[#eaf1ff] pt-px text-[13.5px] text-[#1e40af]">admin</span>
            <span className="ml-1 w-3">·</span>
            <a className="w-[54px] underline underline-offset-2">Logout</a>
          </nav>
        </div>
      </header>
      <main className="pl-px">
        <div className="mx-auto w-[1100px]">
          <section className="h-[92px] rounded-[14px] border border-[#dbe7fe] bg-[#f3f7ff] px-[19px] pt-[17px]">
            <h1 className="flex items-baseline whitespace-pre leading-[34px] text-[#1e40af]">
              <span className="text-[19.4px] font-bold tracking-[-0.13px]">Ghost Net Fishing - Shea Sephard</span>
              <span className="ml-[7px] text-[16px] tracking-[-0.14px]">- Programm für Fallstudie von Patrick Praml – IU14080751</span>
            </h1>
            <p className="whitespace-pre leading-6 tracking-[-0.06px]">
              Interaktive Karte aller gemeldeten Geisternetze. Die Liste findest du in der <a className="font-semibold tracking-[-0.2px] text-[#2563eb] underline underline-offset-2">Übersicht</a>.
            </p>
          </section>
          <div className="relative mt-4 h-[522px] overflow-hidden rounded-[14px] border border-[#dbe7fe]">
            <WorldMap />
            <svg className="absolute h-0 w-0">
              <defs>
                <linearGradient id="pinFill" x1="0" y1="0" x2="0" y2="1">
                  <stop offset="0" stopColor="#4497cd" />
                  <stop offset="1" stopColor="#1168c3" />
                </linearGradient>
                <linearGradient id="pinShadow" gradientUnits="userSpaceOnUse" x1="12" y1="40" x2="35" y2="18">
                  <stop offset="0" stopColor="#000" stopOpacity=".6" />
                  <stop offset=".5" stopColor="#000" stopOpacity=".4" />
                  <stop offset="1" stopColor="#000" stopOpacity="0" />
                </linearGradient>
                <filter id="pinBlur" x="-30%" y="-30%" width="160%" height="160%"><feGaussianBlur stdDeviation="1.7" /></filter>
              </defs>
            </svg>
            {pins.map(([x, y]) => <Pin key={`${x}-${y}`} x={x} y={y} />)}
            <div className="absolute left-[10px] top-[10px] flex w-[34px] flex-col rounded border-2 border-black/20 bg-clip-padding">
              <div className="flex h-[31px] items-center justify-center rounded-t-sm border-b border-[#ccc] bg-white">
                <svg width="13" height="13" viewBox="0 0 13 13"><path d="M6.5 .5v12M.5 6.5h12" stroke="#000" strokeWidth="2.2" /></svg>
              </div>
              <div className="flex h-[30px] items-center justify-center rounded-b-sm bg-white">
                <svg width="13" height="13" viewBox="0 0 13 13" className="ml-px"><path d="M0 6.500h13" stroke="#000" strokeWidth="2" /></svg>
              </div>
            </div>
            <div className="absolute bottom-0 right-0 flex h-[17px] items-center whitespace-pre bg-white/80 px-[5px] pb-[2px] font-['Liberation_Sans',sans-serif] text-[12px] text-[#333]">
              <svg width="12" height="8" viewBox="0 0 12 8" className="mr-1"><path fill="#4c7be1" d="M0 0h12v4H0z" /><path fill="#ffd500" d="M0 4h12v3H0z" /><path fill="#e0bc00" d="M0 7h12v1H0z" /></svg>
              <a className="text-[#0078a8]">Leaflet</a> | © OpenStreetMap
            </div>
          </div>
          <div className="mt-[13px] flex leading-6 text-[#2563eb]">
            <a>Neue Meldung erstellen</a>
            <a className="ml-[17px] tracking-[-0.1px]">Zur Übersicht</a>
          </div>
        </div>
      </main>
    </div>
  );
}
